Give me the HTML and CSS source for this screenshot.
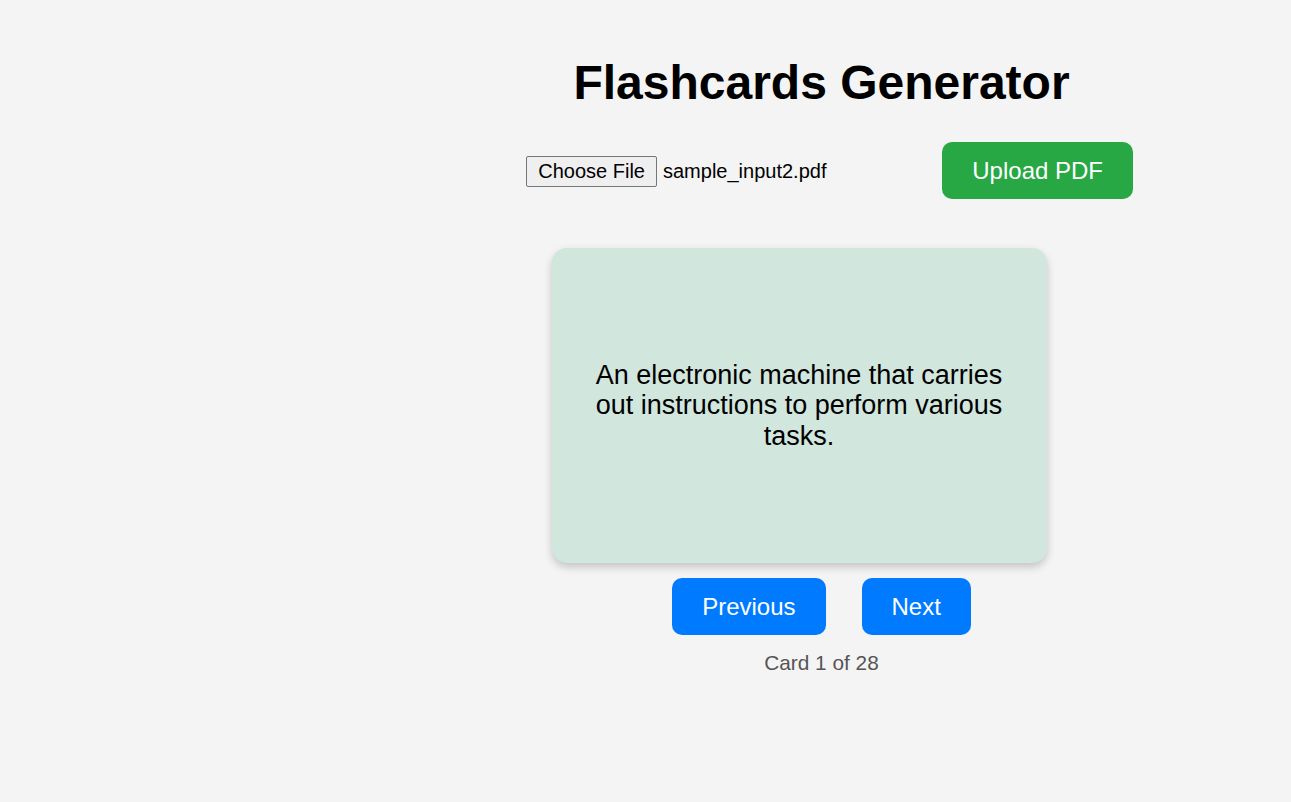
FILE: index.html
```html
<!DOCTYPE html>
<html lang="en">
<head>
<meta charset="utf-8">
<title>Flashcards Generator</title>
<link rel="stylesheet" href="styles.css">
</head>
<body>
<div class="page">
  <div class="side"></div>
  <main class="app">
    <h1 class="title">Flashcards Generator</h1>
    <div class="upload-row">
      <div class="file-field">
        <span class="file-btn">Choose File</span>
        <span class="file-name">sample_input2.pdf</span>
      </div>
      <button class="btn btn-green">Upload PDF</button>
    </div>
    <div class="deck">
      <div class="card">
        <p class="card-text">An electronic machine that carries out instructions to perform various tasks.</p>
      </div>
      <div class="nav">
        <button class="btn btn-blue">Previous</button>
        <button class="btn btn-blue">Next</button>
      </div>
      <p class="count">Card 1 of 28</p>
    </div>
  </main>
</div>
</body>
</html>
```

FILE: styles.css
```css
* { box-sizing: border-box; }
html, body {
  margin: 0;
  padding: 0;
  background: #f4f4f4;
  font-family: "Liberation Sans", Arial, sans-serif;
  color: #000;
}
.page {
  display: flex;
  min-height: 802px;
}
.side {
  width: 352px;
  flex: none;
}
.app {
  flex: 1;
  padding-top: 23px;
  text-align: center;
}
.title {
  font-size: 48px;
  font-weight: bold;
  margin: 32px 0;
  line-height: normal;
}
.upload-row {
  width: 623px;
  margin: 0 auto;
  display: flex;
  justify-content: flex-end;
  align-items: center;
}
.file-field {
  width: 406px;
  display: flex;
  align-items: center;
  font-size: 20px;
  margin-top: 2px;
}
.file-btn {
  display: inline-block;
  border: 1px solid #767676;
  border-radius: 2px;
  background: #efefef;
  padding: 3px 11px;
  line-height: 23px;
  margin-right: 6px;
}
.file-name {
  line-height: 23px;
}
.btn {
  border: none;
  border-radius: 10px;
  color: #fff;
  font-family: "Liberation Sans", Arial, sans-serif;
  font-size: 24px;
  padding: 15px 30px;
  line-height: 27px;
  cursor: pointer;
}
.btn-green {
  background: #28a745;
  margin-left: 10px;
}
.btn-blue {
  background: #007bff;
}
.deck {
  width: 540px;
  margin: 49px auto 0;
}
.card {
  width: 495px;
  height: 315px;
  background: #d1e6dd;
  border-radius: 15px;
  box-shadow: 0 4px 8px rgba(0, 0, 0, 0.2);
  display: flex;
  align-items: center;
  justify-content: center;
  padding: 0 40px;
}
.card-text {
  margin: 0;
  font-size: 27px;
  line-height: 30.5px;
  text-align: center;
}
.nav {
  display: flex;
  justify-content: center;
  gap: 36px;
  margin-top: 15px;
}
.count {
  margin: 16px 0 0;
  font-size: 20.8px;
  color: #555;
}
```
